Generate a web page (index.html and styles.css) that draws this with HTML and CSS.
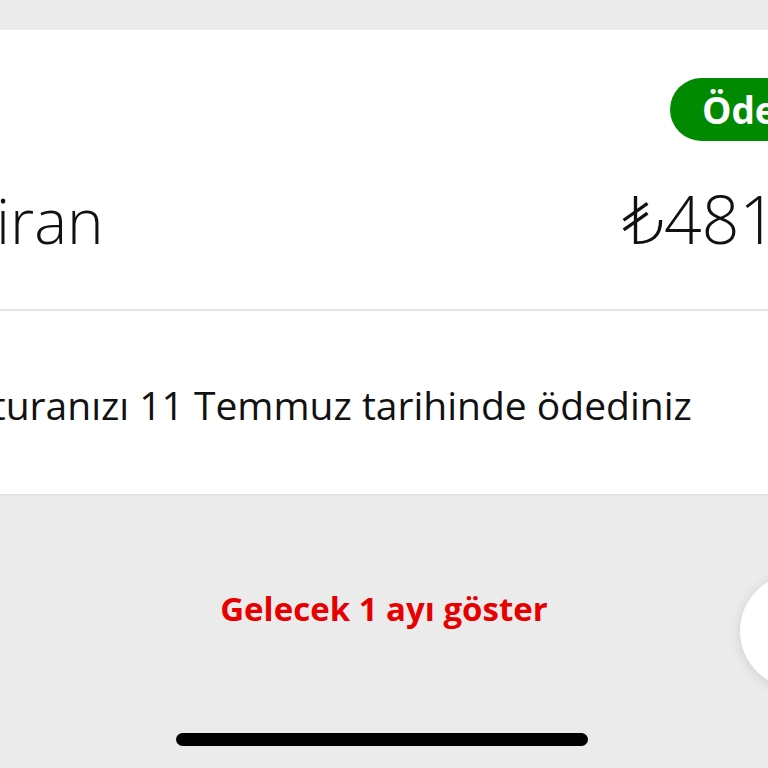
FILE: index.html
```html
<!DOCTYPE html>
<html lang="tr">
<head>
<meta charset="utf-8">
<link rel="stylesheet" href="styles.css">
</head>
<body>
<div class="screen">
  <section class="card">
    <div class="card-top">
      <div class="badge-row">
        <div class="badge-slot"><span class="badge">Ödendi</span></div>
      </div>
      <div class="amount-row">
        <span class="month">Haziran</span>
        <span class="amount">₺481</span>
      </div>
    </div>
    <div class="card-bottom">
      <p class="paid-note">Faturanızı 11 Temmuz tarihinde ödediniz</p>
    </div>
  </section>
  <div class="more-row">
    <a class="more-link">Gelecek 1 ayı göster</a>
  </div>
  <div class="home-bar"><span class="home-indicator"></span></div>
  <span class="fab"></span>
</div>
</body>
</html>
```
FILE: styles.css
```css
html, body {
  margin: 0;
  padding: 0;
}
body {
  width: 768px;
  height: 768px;
  overflow: hidden;
  background: #ebebeb;
  font-family: "Open Sans", "DejaVu Sans", sans-serif;
  color: #1a1a1a;
}
.screen {
  position: relative;
  width: 768px;
  height: 768px;
  display: flex;
  flex-direction: column;
}
.card {
  margin-top: 30px;
  background: #ffffff;
  box-shadow: 0 1px 2px rgba(0,0,0,0.06);
}
.card-top {
  height: 281px;
  border-bottom: 2px solid #e4e4e4;
  padding-top: 48px;
  box-sizing: border-box;
  display: flex;
  flex-direction: column;
}
.badge-row {
  display: flex;
  justify-content: flex-end;
}
.badge-slot {
  width: 98px;
  white-space: nowrap;
}
.badge {
  display: inline-flex;
  align-items: center;
  height: 63px;
  padding: 0 30px 0 32px;
  border-radius: 32px;
  background: #008a00;
  color: #ffffff;
  font-weight: 700;
  font-size: 37px;
}
.amount-row {
  display: flex;
  justify-content: space-between;
  align-items: baseline;
  margin-top: 44px;
}
.month {
  font-size: 62px;
  font-weight: 300;
  margin-left: -110px;
  white-space: nowrap;
  line-height: 1;
  color: #111111;
}
.amount {
  width: 146px;
  font-size: 66px;
  font-weight: 300;
  white-space: nowrap;
  line-height: 1;
  color: #111111;
}
.card-bottom {
  height: 183px;
  display: flex;
  align-items: center;
}
.paid-note {
  margin: 0 0 0 -50px;
  font-size: 39px;
  white-space: nowrap;
  padding-top: 4px;
  color: #111111;
}
.more-row {
  height: 226px;
  display: flex;
  align-items: center;
  justify-content: center;
}
.more-link {
  color: #e60000;
  font-weight: 700;
  font-size: 33px;
  margin-top: 2px;
}
.home-bar {
  display: flex;
  justify-content: center;
  padding-top: 13px;
}
.home-indicator {
  width: 412px;
  height: 13px;
  border-radius: 7px;
  background: #000000;
  margin-left: -4px;
}
.fab {
  position: absolute;
  left: 740px;
  top: 574px;
  width: 114px;
  height: 114px;
  border-radius: 50%;
  background: #ffffff;
  box-shadow: 0 2px 12px rgba(0,0,0,0.12);
}
```
